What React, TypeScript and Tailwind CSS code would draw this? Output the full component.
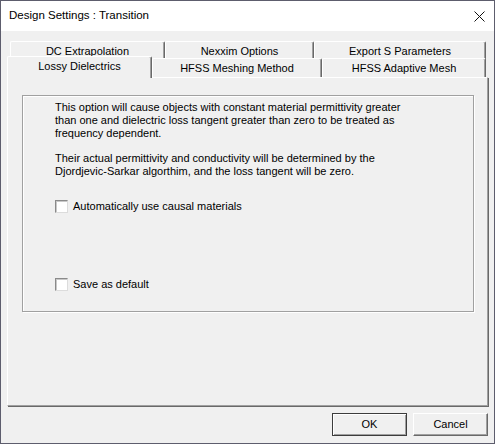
import React from 'react';

type Tab = { label: string; width: number };

const BACK_ROW: Tab[] = [
  { label: 'DC Extrapolation', width: 155 },
  { label: 'Nexxim Options', width: 149 },
  { label: 'Export S Parameters', width: 172 },
];

const FRONT_ROW: Tab[] = [
  { label: 'Lossy Dielectrics', width: 145 },
  { label: 'HFSS Meshing Method', width: 170 },
  { label: 'HFSS Adaptive Mesh', width: 164 },
];

const Checkbox = ({ label }: { label: string }) => (
  <label className="flex items-center gap-[5px] h-[13px] leading-[13px]">
    <span className="block w-[13px] h-[13px] bg-white border border-t-[#8a8a8a] border-l-[#8a8a8a] border-r-[#dcdcdc] border-b-[#dcdcdc] shadow-[inset_1px_1px_0_#c8c8c8]" />
    <span>{label}</span>
  </label>
);

const TabButton = ({ tab, selected }: { tab: Tab; selected?: boolean }) => (
  <div
    className={
      selected
        ? 'relative z-10 h-[22px] -mb-[1px] bg-[#f0f0f0] border-t border-l border-white border-r border-r-[#696969] shadow-[inset_-1px_0_0_#a0a0a0] rounded-t-[2px] flex justify-center pt-[3px] leading-[13px]'
        : 'h-[19px] bg-[#f0f0f0] border-t border-l border-white border-r border-r-[#696969] shadow-[inset_-1px_0_0_#a0a0a0] rounded-t-[2px] flex justify-center pt-[3px] leading-[13px]'
    }
    style={{ width: tab.width }}
  >
    {tab.label}
  </div>
);

export default function App() {
  return (
    <div className="w-[495px] h-[444px] border border-[#5d5d6d] bg-[#f0f0f0] flex flex-col overflow-hidden font-['Liberation_Sans',Arial,sans-serif] text-[11px] text-black">
      {/* Title bar */}
      <div className="h-[30px] bg-white flex items-center justify-between pl-[8px] pr-[9px]">
        <span className="text-[11.5px]">Design Settings : Transition</span>
        <svg width="11" height="11" viewBox="0 0 11 11" className="block">
          <path d="M0.5 0.5 L10.5 10.5 M10.5 0.5 L0.5 10.5" stroke="#111" strokeWidth="1" />
        </svg>
      </div>

      {/* Body */}
      <div className="flex-1 flex flex-col pt-[10px] pl-[6px]">
        <div className="w-[481px] flex flex-col">
          {/* back row of tabs */}
          <div className="h-[17px] flex pl-[3px]">
            {BACK_ROW.map((t) => (
              <div
                key={t.label}
                className="h-[19px] bg-[#f0f0f0] border-t border-l border-white border-r border-r-[#696969] shadow-[inset_-1px_0_0_#a0a0a0] rounded-t-[2px] flex justify-center pt-[3px] leading-[13px]"
                style={{ width: t.width }}
              >
                {t.label}
              </div>
            ))}
          </div>
          {/* front row of tabs */}
          <div className="relative z-10 h-[21px] -mt-[2px] flex items-end">
            {FRONT_ROW.map((t, i) => (
              <TabButton key={t.label} tab={t} selected={i === 0} />
            ))}
          </div>

          {/* Tab page */}
          <div className="h-[329px] border-t border-l border-white border-r border-b border-r-[#a0a0a0] border-b-[#a0a0a0] shadow-[1px_1px_0_#696969] flex flex-col">
            <div className="ml-[14px] mt-[17px] w-[452px] h-[217px] border border-[#a0a0a0] shadow-[1px_1px_0_#fff,inset_1px_1px_0_#fff] pl-[32px] pt-[5px] leading-[13px] flex flex-col">
              <p className="whitespace-nowrap">
                This option will cause objects with constant material permittivity greater
                <br />
                than one and dielectric loss tangent greater than zero to be treated as
                <br />
                frequency dependent.
              </p>
              <p className="mt-[12px] whitespace-nowrap">
                Their actual permittivity and conductivity will be determined by the
                <br />
                Djordjevic-Sarkar algorthim, and the loss tangent will be zero.
              </p>
              <div className="mt-[22px]">
                <Checkbox label="Automatically use causal materials" />
              </div>
              <div className="mt-[65px]">
                <Checkbox label="Save as default" />
              </div>
            </div>
          </div>

          {/* Buttons */}
          <div className="flex justify-end gap-[6px] mt-[7px]">
            <button className="w-[75px] h-[23px] bg-[#f0f0f0] border border-[#3c3c3c] shadow-[inset_1px_1px_0_#fff,inset_-1px_-1px_0_#a0a0a0] leading-[13px]">
              OK
            </button>
            <button className="w-[75px] h-[23px] bg-[#f0f0f0] border border-t-white border-l-white border-r-[#696969] border-b-[#696969] shadow-[inset_-1px_-1px_0_#a0a0a0] leading-[13px]">
              Cancel
            </button>
          </div>
        </div>
      </div>
    </div>
  );
}
